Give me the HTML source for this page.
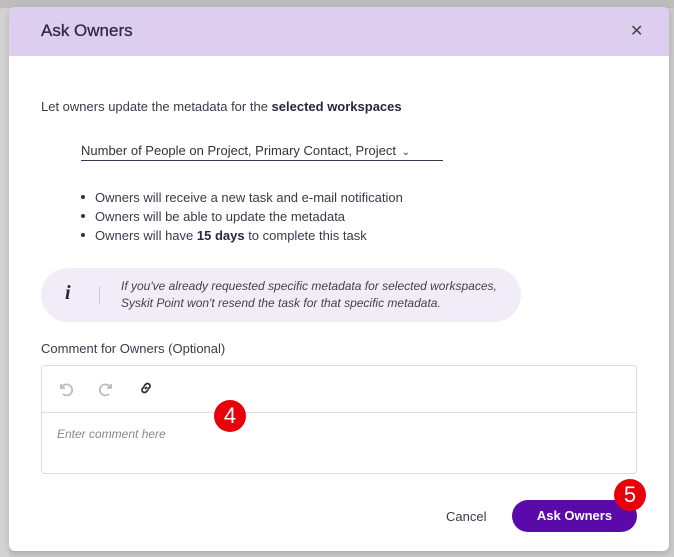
<!DOCTYPE html>
<html><head><meta charset="utf-8"><style>
*{box-sizing:border-box;margin:0;padding:0}
body{width:674px;height:557px;overflow:hidden;background:#c9c9c9;font-family:"Liberation Sans",sans-serif;color:#3a3a4a;position:relative}
.topbar{position:absolute;left:0;top:0;width:674px;height:8px;background:#bdbdbd}
.strip{position:absolute;left:0;top:8px;width:9px;height:549px;background:#d2d2d2}
.modal{position:absolute;left:9px;top:7px;width:660px;height:544px;background:#fff;border-radius:6px;overflow:hidden;box-shadow:0 2px 6px rgba(0,0,0,.15)}
.hdr{height:49px;background:#ddcdee;position:relative}
.hdr h1{position:absolute;left:32px;top:14px;font-size:17px;font-weight:normal;color:#2f2b40;-webkit-text-stroke:0.3px #2f2b40}
.x{position:absolute;left:621px;top:14px;font-size:16px;color:#444}
.t{position:absolute;font-size:13px;color:#3a3a4a;white-space:nowrap}
b{color:#2a2640}
.dd{position:absolute;left:72px;top:136px;width:362px;border-bottom:1.5px solid #3a3650;font-size:13px;padding-bottom:2px;color:#333}
ul{position:absolute;left:88px;top:181px;font-size:13px;line-height:19px;list-style:none}
ul li:before{content:"";display:inline-block;width:4px;height:4px;border-radius:50%;background:#333;margin:0 10px 3px -16px;vertical-align:middle}
.info{position:absolute;left:32px;top:261px;width:480px;height:54px;background:#f1ecf8;border-radius:27px}
.info .i{position:absolute;left:24px;top:14px;font:italic bold 20px "Liberation Serif",serif;color:#2a2640}
.info .sep{position:absolute;left:58px;top:18px;width:1px;height:18px;background:#ccc}
.info .tx{position:absolute;left:80px;top:10px;font-size:12px;font-style:italic;line-height:17px;color:#444}
.ed{position:absolute;left:32px;top:358px;width:596px;height:109px;border:1px solid #ddd;border-radius:3px}
.tb{height:47px;border-bottom:1px solid #ddd;position:relative}
.badge{position:absolute;width:32px;height:32px;border-radius:50%;background:#e8000a;color:#fff;font-size:22px;text-align:center;line-height:32px}
.btn{position:absolute;left:503px;top:493px;width:125px;height:32px;border-radius:16px;background:#5a0aa8;color:#fff;font-weight:bold;font-size:13px;text-align:center;line-height:32px}
</style></head><body>
<div class="topbar"></div><div class="strip"></div>
<div class="modal">
<div class="hdr"><h1>Ask Owners</h1><div class="x">✕</div></div>
<div class="t" style="left:32px;top:92px">Let owners update the metadata for the <b>selected workspaces</b></div>
<div class="dd">Number of People on Project, Primary Contact, Project <span style="font-size:10px;margin-left:2px">⌄</span></div>
<ul><li>Owners will receive a new task and e-mail notification</li><li>Owners will be able to update the metadata</li><li>Owners will have <b>15 days</b> to complete this task</li></ul>
<div class="info"><div class="i">i</div><div class="sep"></div><div class="tx">If you've already requested specific metadata for selected workspaces,<br>Syskit Point won't resend the task for that specific metadata.</div></div>
<div class="t" style="left:32px;top:334px">Comment for Owners (Optional)</div>
<div class="ed"><div class="tb">
<svg style="position:absolute;left:15px;top:14px" width="18" height="18" viewBox="0 0 18 18" fill="none" stroke="#bbb" stroke-width="1.8"><path d="M4 4v4h4"/><path d="M4.5 8a5.5 5.5 0 1 1 1.5 6"/></svg>
<svg style="position:absolute;left:55px;top:14px" width="18" height="18" viewBox="0 0 18 18" fill="none" stroke="#bbb" stroke-width="1.8"><path d="M14 4v4h-4"/><path d="M13.5 8a5.5 5.5 0 1 0-1.5 6"/></svg>
<svg style="position:absolute;left:95px;top:13px" width="18" height="18" viewBox="0 0 18 18" fill="none" stroke="#333" stroke-width="1.8"><path d="M8 10l2-2"/><path d="M7 7l2-2a2.5 2.5 0 0 1 3.5 3.5l-2 2"/><path d="M11 11l-2 2a2.5 2.5 0 0 1-3.5-3.5l2-2"/></svg>
</div>
<div class="t" style="left:15px;top:61px;font-style:italic;font-size:12px;color:#888">Enter comment here</div></div>
<div class="t" style="left:437px;top:502px">Cancel</div>
<div class="btn">Ask Owners</div>
</div>
<div class="badge" style="left:214px;top:400px">4</div>
<div class="badge" style="left:614px;top:479px">5</div>
</body></html>
